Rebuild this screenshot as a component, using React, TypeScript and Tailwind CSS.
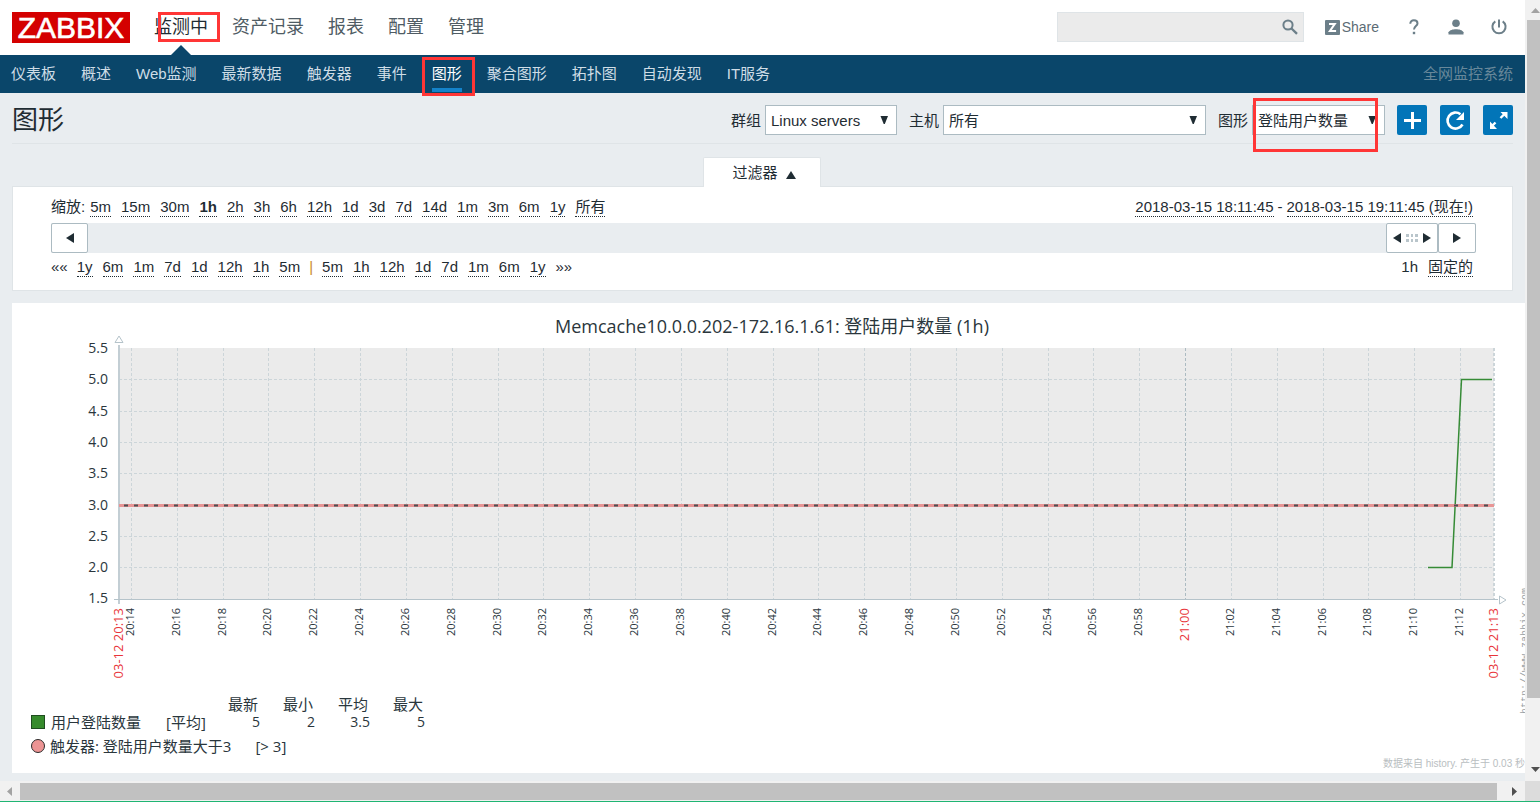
import type { ReactNode } from "react";

const MAIN_MENU = ["监测中", "资产记录", "报表", "配置", "管理"];

const SUB_MENU = [
  "仪表板",
  "概述",
  "Web监测",
  "最新数据",
  "触发器",
  "事件",
  "图形",
  "聚合图形",
  "拓扑图",
  "自动发现",
  "IT服务",
];

const ZOOM_LEVELS = ["5m", "15m", "30m", "1h", "2h", "3h", "6h", "12h", "1d", "3d", "7d", "14d", "1m", "3m", "6m", "1y", "所有"];
const STEPS_BACK = ["1y", "6m", "1m", "7d", "1d", "12h", "1h", "5m"];
const STEPS_FORWARD = ["5m", "1h", "12h", "1d", "7d", "1m", "6m", "1y"];

const LEGEND_COLUMNS = ["最新", "最小", "平均", "最大"];
const LEGEND_VALUES = ["5", "2", "3.5", "5"];

function Highlight({ className }: { className: string }) {
  return <span className={`pointer-events-none absolute z-10 border-3 border-[#ff3636] ${className}`} />;
}

function Logo() {
  return (
    <a href="#" aria-label="ZABBIX" className="block shrink-0">
      <svg width="118" height="31" viewBox="0 0 118 31" className="overflow-visible">
        <rect width="118" height="31" fill="#d40000" />
        <text
          x="59"
          y="26"
          textAnchor="middle"
          fontSize="30"
          fill="#fff"
          stroke="#fff"
          strokeWidth="0.6"
          fontFamily="Liberation Sans, sans-serif"
        >
          ZABBIX
        </text>
      </svg>
    </a>
  );
}

function Header() {
  return (
    <header className="flex h-[55px] items-start bg-white pr-[18px] pl-3 pt-3">
      <Logo />
      <nav className="ml-6 flex gap-6 text-[18px] leading-[31px] text-[#4f5c64]">
        {MAIN_MENU.map((item, idx) => (
          <a key={item} href="#" className={idx === 0 ? "relative h-[43px] text-[#1f2c33]" : "h-[43px]"}>
            {item}
            {idx === 0 && (
              <>
                <Highlight className="-right-[12px] top-0 h-[30px] w-[62px]" />
                <svg className="absolute bottom-0 left-[17px]" width="20" height="10" viewBox="0 0 20 10">
                  <path d="M0 10 10 0l10 10z" fill="#0a466a" />
                </svg>
              </>
            )}
          </a>
        ))}
      </nav>
      <div className="ml-auto flex items-center">
        <div className="relative">
          <input
            type="text"
            aria-label="搜索"
            className="block h-[30px] w-[247px] border border-[#dfe4e7] bg-[#ebebeb] pr-8 pl-2 text-sm outline-none"
          />
          <button type="button" aria-label="搜索" className="absolute top-[7px] right-[6px]">
            <svg width="16" height="16" viewBox="0 0 16 16" fill="none" stroke="#6c7f89">
              <circle cx="6" cy="6" r="4.6" strokeWidth="2" />
              <path d="m9.5 9.5 5.5 5.3" strokeWidth="2.4" />
            </svg>
          </button>
        </div>
        <a href="#" className="ml-[21px] flex items-center gap-[2px] text-[14px] text-[#5c6b75]">
          <svg width="15" height="15" viewBox="0 0 15 15">
            <rect width="15" height="15" rx="1" fill="#6c7f89" />
            <path d="M4 3.900h5.800L4.900 11h6.200" fill="none" stroke="#fff" strokeWidth="2" />
          </svg>
          Share
        </a>
        <a href="#" aria-label="帮助" className="ml-[30px]">
          <svg width="10" height="16" viewBox="0 0 10 16" fill="none" stroke="#6c7f89" strokeWidth="2">
            <path d="M1.300 4.800C1.300 2.500 2.700 1.200 4.900 1.200s3.600 1.200 3.600 3.200c0 2.500-3.500 3-3.500 6.100" />
            <path d="M3.800 14h2.400" strokeWidth="2.400" />
          </svg>
        </a>
        <a href="#" aria-label="用户" className="ml-[29px]">
          <svg width="16" height="16" viewBox="0 0 16 16" fill="#6c7f89">
            <circle cx="8" cy="4.300" r="3.800" />
            <path d="M0.500 15.500v-2.200C1.500 11 5 10.200 8 10.200s6.500.8 7.500 3.100v2.200z" />
          </svg>
        </a>
        <a href="#" aria-label="退出" className="ml-[27px]">
          <svg width="16" height="16" viewBox="0 0 16 16" fill="none" stroke="#6c7f89" strokeWidth="2">
            <path d="M8 0.500v8" />
            <path d="M4.300 2.300A6.600 6.600 0 1 0 11.700 2.300" />
          </svg>
        </a>
      </div>
    </header>
  );
}

function SubNav() {
  return (
    <nav className="flex h-[38px] items-stretch gap-[25px] bg-[#0a466a] pr-3 pl-[11px] leading-[37px] text-[#cfdde6]">
      {SUB_MENU.map((item) =>
        item === "图形" ? (
          <a key={item} href="#" className="relative text-white">
            {item}
            <span className="absolute inset-x-0 bottom-[1px] h-1 bg-[#1483ca]" />
            <Highlight className="-left-[10px] top-[2px] h-[39px] w-[53px]" />
          </a>
        ) : (
          <a key={item} href="#">
            {item}
          </a>
        )
      )}
      <span className="ml-auto text-[#68889a]">全网监控系统</span>
    </nav>
  );
}

function SelectField({ id, label, value, width, marked }: { id: string; label: string; value: string; width: string; marked?: boolean }) {
  return (
    <div className="flex items-center gap-1">
      <label htmlFor={id} className="pt-[2px]">
        {label}
      </label>
      <div className="relative">
        <select
          id={id}
          className={`block h-[30px] appearance-none border border-[#acbbc2] bg-white pt-[2px] pr-6 pl-[5px] outline-none ${width}`}
        >
          <option>{value}</option>
        </select>
        <svg className="pointer-events-none absolute top-[11px] right-2" width="9" height="8" viewBox="0 0 9 8">
          <path d="M0.500 0h7.500L4.800 8h-1.100z" fill="#1f2c33" />
        </svg>
        {marked && <Highlight className="-top-[7px] left-[1px] h-[54px] w-[125px]" />}
      </div>
    </div>
  );
}

function BlueButton({ label, children }: { label: string; children: ReactNode }) {
  return (
    <button type="button" aria-label={label} className="size-[30px] rounded-[2px] bg-[#0275b8]">
      <svg width="30" height="30" viewBox="0 0 30 30" fill="none" stroke="#fff">
        {children}
      </svg>
    </button>
  );
}

function TitleBar() {
  return (
    <div className="mr-3 ml-3 flex items-center border-b border-[#dfe4e7] pt-3 pb-2">
      <h1 className="text-[26px] leading-[30px]">图形</h1>
      <form className="ml-auto flex gap-3">
        <SelectField id="group" label="群组" value="Linux servers" width="w-[132px]" />
        <SelectField id="host" label="主机" value="所有" width="w-[263px]" />
        <SelectField id="graph" label="图形" value="登陆用户数量" width="w-[133px]" marked />
      </form>
      <div className="ml-3 flex gap-[13px]">
        <BlueButton label="添加">
          <path d="M15.500 7v17M7 15.500h17" strokeWidth="3" />
        </BlueButton>
        <BlueButton label="刷新">
          <path d="M22.500 19.500A8 8 0 1 1 20.500 9.300" strokeWidth="2.600" />
          <path d="M24 7v8h-8z" fill="#fff" stroke="none" />
        </BlueButton>
        <BlueButton label="全屏">
          <path d="m17.500 13 4.500-4.500M12.500 17.500 8.500 21.500" strokeWidth="2.400" />
          <path d="M17.500 7H24.500v7zM7 16.500v7.500h7z" fill="#fff" stroke="none" />
        </BlueButton>
      </div>
    </div>
  );
}

function DottedLink({ children, bold }: { children: ReactNode; bold?: boolean }) {
  return (
    <a href="#" className={`border-b border-dotted border-[#1f2c33] leading-[18px] ${bold ? "font-bold" : ""}`}>
      {children}
    </a>
  );
}

function Triangle({ left }: { left?: boolean }) {
  return (
    <svg width="8" height="10" viewBox="0 0 8 10">
      <path d={left ? "M8 0v10L0 5z" : "M0 0v10l8-5z"} fill="#1f2c33" />
    </svg>
  );
}

function TimeFilter() {
  return (
    <section className="mx-3 mt-[13px]">
      <div className="relative z-1 -mb-px flex justify-center pr-[1px]">
        <button
          type="button"
          className="flex h-[30px] w-[118px] items-center justify-center gap-2 rounded-t-[2px] border border-b-0 border-[#dfe4e7] bg-white pt-[2px] pl-1"
        >
          过滤器
          <svg className="mt-[2px]" width="10" height="8" viewBox="0 0 10 8">
            <path d="M5 0l5 8H0z" fill="#1f2c33" />
          </svg>
        </button>
      </div>
      <div className="border border-[#dfe4e7] bg-white pt-[11px] pr-9 pb-[12px] pl-[38px]">
        <div className="flex h-[19px] items-start justify-between pr-[3px] leading-[18px]">
          <div className="flex gap-[10px]">
            <span className="-mr-[5px]">缩放:</span>
            {ZOOM_LEVELS.map((level) => (
              <DottedLink key={level} bold={level === "1h"}>
                {level}
              </DottedLink>
            ))}
          </div>
          <div className="flex gap-1">
            <DottedLink>2018-03-15 18:11:45</DottedLink>
            <span>-</span>
            <DottedLink>2018-03-15 19:11:45 (现在!)</DottedLink>
          </div>
        </div>
        <div className="mt-[6px] flex h-[30px] bg-[#e9edf0]">
          <button type="button" aria-label="向后" className="flex w-[37px] items-center justify-center rounded-[2px] border border-[#acbbc2] bg-white">
            <Triangle left />
          </button>
          <button
            type="button"
            aria-label="时间范围"
            className="ml-auto flex w-[52px] items-center justify-center gap-[5px] rounded-[2px] border border-[#acbbc2] bg-white"
          >
            <Triangle left />
            <svg width="12" height="8" viewBox="0 0 12 8" fill="#b9c5cb">
              <path d="M0 0h3v3H0zM5 0h2v3H5zM9 0h3v3H9zM0 5h3v3H0zM5 5h2v3H5zM9 5h3v3H9z" />
            </svg>
            <Triangle />
          </button>
          <button type="button" aria-label="向前" className="flex w-[38px] items-center justify-center rounded-[2px] border border-[#acbbc2] bg-white">
            <Triangle />
          </button>
        </div>
        <div className="mt-[5px] flex h-5 items-start justify-between pr-[3px] leading-[18px]">
          <div className="flex items-start gap-[10px]">
            <span className="-mr-px">««</span>
            {STEPS_BACK.map((step) => (
              <DottedLink key={step}>{step}</DottedLink>
            ))}
            <span className="-mx-[1px] text-[#c98a2b]">|</span>
            {STEPS_FORWARD.map((step) => (
              <DottedLink key={step}>{step}</DottedLink>
            ))}
            <span>»»</span>
          </div>
          <div className="flex items-start gap-[10px]">
            <span>1h</span>
            <DottedLink>固定的</DottedLink>
          </div>
        </div>
      </div>
    </section>
  );
}

// plot area inside the 1513 wide drawing
const LEFT = 107;
const RIGHT = 1482;
const TOP = 45;
const BOTTOM = 296;

const Y_TICKS = ["5.5", "5.0", "4.5", "4.0", "3.5", "3.0", "2.5", "2.0", "1.5"].map((label, i) => ({
  label,
  y: Math.round(TOP + i * 31.3),
}));

const X_TICKS = Array.from({ length: 30 }, (_, i) => {
  const minutes = 14 + i * 2;
  const hour = 20 + Math.floor(minutes / 60);
  return {
    label: `${hour}:${String(minutes % 60).padStart(2, "0")}`,
    x: Math.round(119 + i * 45.83),
  };
});

function RotatedLabel({ x, label, red }: { x: number; label: string; red?: boolean }) {
  return (
    <text
      transform={`translate(${x + (red ? 4 : 3)} 305) rotate(-90)`}
      textAnchor="end"
      fontSize={red ? 13 : 11}
      fill={red ? "#e8353a" : "#2a363c"}
    >
      {label}
    </text>
  );
}

function Plot() {
  return (
    <svg viewBox="0 0 1513 385" className="block h-auto w-full overflow-visible" fontFamily="Open Sans, Noto Sans CJK SC, sans-serif">
      <text x="760" y="30" textAnchor="middle" fontSize="18" fill="#2a363c">
        Memcache10.0.0.202-172.16.1.61: 登陆用户数量 (1h)
      </text>
      <rect x={LEFT} y={TOP} width={RIGHT - LEFT} height={BOTTOM - TOP} fill="#ebebeb" />
      <g stroke="#ccd5d9" strokeDasharray="3 2">
        {Y_TICKS.slice(1, -1).map((t) => (
          <path key={t.label} d={`M${LEFT} ${t.y + 0.5}H${RIGHT}`} />
        ))}
        {X_TICKS.map((t) => (
          <path key={t.label} d={`M${t.x + 0.5} ${TOP}V${BOTTOM}`} stroke={t.label === "21:00" ? "#acbbc2" : undefined} />
        ))}
        <path d={`M${RIGHT} ${TOP}V${BOTTOM}`} strokeWidth="2" />
      </g>
      <g fill="none" stroke="#b5c3ca">
        <path d={`M${LEFT} 42V301`} strokeWidth="2" stroke="#c3ced4" />
        <path d={`M102 ${BOTTOM + 0.5}H1486`} />
        <path d="M103 39.500 107 33l4 6.500z" fill="#fff" />
        <path d="M1487.500 293v8l6.500-4z" fill="#fff" />
      </g>
      <g textAnchor="end" fontSize="14" fill="#2a363c">
        {Y_TICKS.map((t) => (
          <text key={t.label} x="96" y={t.y + 5}>
            {t.label}
          </text>
        ))}
      </g>
      {X_TICKS.map((t) => (
        <RotatedLabel key={t.label} x={t.x} label={t.label} red={t.label === "21:00"} />
      ))}
      <RotatedLabel x={LEFT} label="03-12 20:13" red />
      <RotatedLabel x={RIGHT} label="03-12 21:13" red />
      <path d="M1416 264.500h24l9.500-188H1480" fill="none" stroke="#368b36" strokeWidth="1.500" />
      <path d={`M${LEFT} 202.500H${RIGHT}`} stroke="#e89595" strokeWidth="3" />
      <path d={`M${LEFT + 5} 202.500H${RIGHT}`} stroke="#4b4e52" strokeWidth="2" strokeDasharray="4 6" />
      <text transform="translate(1516 411) rotate(-90)" fontSize="10" fill="#9ba2a6" fontFamily="Liberation Mono, monospace">
        http://www.zabbix.com
      </text>
    </svg>
  );
}

function Legend() {
  return (
    <div className="pl-[19px] font-['Open_Sans','Noto_Sans_CJK_SC',sans-serif] text-[15px] leading-[18px] text-[#2a363c]">
      <table className="w-[394px] table-fixed border-collapse">
        <colgroup>
          <col className="w-[135px]" />
          <col className="w-[39px]" />
          <col span={4} className="w-[55px]" />
        </colgroup>
        <thead>
          <tr>
            <td colSpan={2} />
            {LEGEND_COLUMNS.map((name) => (
              <th key={name} className="p-0 pr-[2px] text-right font-normal">
                {name}
              </th>
            ))}
          </tr>
        </thead>
        <tbody>
          <tr>
            <th className="p-0 text-left font-normal">
              <span className="flex items-center gap-[6px]">
                <span className="size-[14px] border border-[#1f4d1f] bg-[#368b2c]" />
                用户登陆数量
              </span>
            </th>
            <td className="p-0 whitespace-nowrap">[平均]</td>
            {LEGEND_VALUES.map((value, idx) => (
              <td key={idx} className="p-0 text-right text-[14px]">
                {value}
              </td>
            ))}
          </tr>
        </tbody>
      </table>
      <p className="mt-[6px] flex items-center">
        <span className="mr-[5px] size-[14px] rounded-full border border-[#2b2b2b] bg-[#ec9494]" />
        <span>触发器: 登陆用户数量大于3</span>
        <span className="ml-6">[&gt; 3]</span>
      </p>
    </div>
  );
}

function VerticalScrollbar() {
  return (
    <div className="flex w-[15px] shrink-0 flex-col bg-[#f1f1f1] pl-[2px]">
      <svg className="shrink-0" width="13" height="20" viewBox="0 0 13 20">
        <path d="M4 13l4.500-5 4.500 5z" fill="#a3a3a3" />
      </svg>
      <div className="h-[678px] bg-[#c1c1c1]" />
      <svg className="mt-auto mb-[6px] shrink-0" width="13" height="10" viewBox="0 0 13 10">
        <path d="M4 2h9L8.500 7z" fill="#505050" />
      </svg>
    </div>
  );
}

function HorizontalScrollbar() {
  return (
    <div className="flex h-[21px] items-start border-b border-[#20b573] bg-[#f1f1f1]">
      <svg className="mt-[2px]" width="20" height="17" viewBox="0 0 20 17">
        <path d="M12 4v9L7 8.500z" fill="#a3a3a3" />
      </svg>
      <div className="mt-[2px] h-[17px] flex-1 bg-[#c1c1c1]" />
      <svg className="mt-[2px]" width="28" height="17" viewBox="0 0 28 17">
        <path d="M15 4v9l5-4.500z" fill="#505050" />
      </svg>
      <div className="h-full w-[15px] bg-[#dcdcdc]" />
    </div>
  );
}

export default function App() {
  return (
    <div className="flex min-h-screen flex-col bg-[#e9edf0] font-['Liberation_Sans','Noto_Sans_CJK_SC',sans-serif] text-[15px] text-[#1f2c33]">
      <div className="flex flex-1">
        <main className="min-w-0 flex-1 overflow-hidden pb-2">
          <Header />
          <SubNav />
          <TitleBar />
          <TimeFilter />
          <section className="mt-3 ml-3 overflow-hidden bg-white">
            <Plot />
            <div className="pt-[7px]">
              <Legend />
            </div>
            <p className="mt-[3px] pb-[3px] text-right text-[10px] leading-3 text-[#b9bec1]">数据来自 history. 产生于 0.03 秒</p>
          </section>
        </main>
        <VerticalScrollbar />
      </div>
      <HorizontalScrollbar />
    </div>
  );
}
